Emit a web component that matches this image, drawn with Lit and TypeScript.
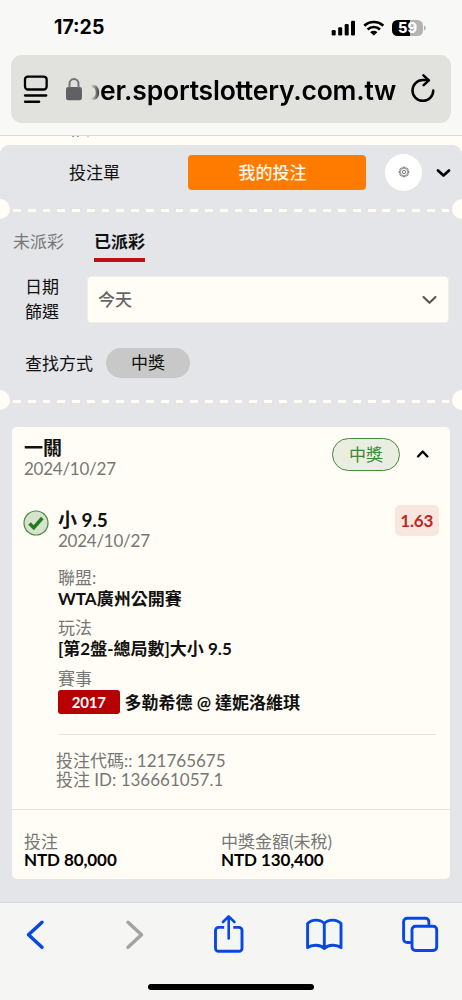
import { LitElement, html, css, svg } from "lit";
import { customElement, property } from "lit/decorators.js";

const base = css`
  * { box-sizing: border-box; }
  :host {
    display: block;
    font-family: Lato, "Noto Sans CJK TC", sans-serif;
    font-size: 17px;
    color: #111;
  }
  svg { display: block; }
`;

@customElement("browser-top")
class BrowserTop extends LitElement {
  static styles = [base, css`
    .top { height: 136px; background: #f8f8f6; border-bottom: 1px solid #d8d8d5; padding: 16px 11px 0; font-family: Inter, sans-serif; }
    .status { height: 23px; display: flex; align-items: center; padding: 0 25px 0 43px; }
    .time { flex: 1; font-size: 19.5px; font-weight: 700; color: #000; line-height: 23px; letter-spacing: 0; }
    .url { margin-top: 16px; height: 68px; border-radius: 11px; background: #e1e1de; display: flex; align-items: center; padding: 0 15px 0 12px; }
    .lock { margin-left: 17px; }
    .address {
      width: 306px; margin: 1px 0 0 8px; overflow: hidden; display: flex; justify-content: flex-end;
      font-size: 26.5px; line-height: 36px; font-weight: 600; color: #000; letter-spacing: -0.22px; white-space: nowrap;
      -webkit-mask-image: linear-gradient(90deg, transparent, #000 11px); mask-image: linear-gradient(90deg, transparent, #000 11px);
    }
    .reload { margin-left: 14px; }
  `];
  render() {
    return html`<div class="top">
      <div class="status">
        <span class="time">17:25</span>
        <svg width="96" height="20" viewBox="331 17 96 20">
          <rect x="332.7" y="29" width="4" height="5.5" rx="1.2"/><rect x="339.2" y="26.3" width="4" height="8.2" rx="1.2"/>
          <rect x="345.7" y="23" width="4" height="11.5" rx="1.2"/><rect x="352" y="19.8" width="4" height="14.7" rx="1.2"/>
          <g fill="none" stroke="#000" stroke-width="2.7"><path d="M365.3 24.8a13.8 13.8 0 0 1 19 0"/><path d="M368.6 28.5a9 9 0 0 1 12.4 0"/></g>
          <path d="M371.2 31.2a5.2 5.2 0 0 1 7.2 0l-3.6 3.4z"/>
          <path d="M398.500 19h12.500v16h-12.500a5.500 5.500 0 0 1-5.500-5.500v-5a5.500 5.500 0 0 1 5.500-5.500z"/>
          <path d="M411 19h7.500a5.500 5.500 0 0 1 5.500 5.500v5a5.500 5.500 0 0 1-5.500 5.500h-7.500z" fill="#b3b3b1"/>
          <path d="M425 24.500a2.600 2.600 0 0 1 0 5z" fill="#b3b3b1"/>
          <text x="408.500" y="32.200" text-anchor="middle" font-family="Inter" font-weight="800" font-size="14.500" fill="#fff">59</text>
        </svg>
      </div>
      <div class="url">
        <svg width="26" height="30" viewBox="23 74 26 30" fill="none" stroke="#000" stroke-width="2.3" stroke-linecap="round">
          <rect x="25" y="76.500" width="21.700" height="13" rx="3"/><path d="M25 95.500h21.300M25 101.800h14.200"/>
        </svg>
        <svg class="lock" width="17" height="24" viewBox="66 77 17 24">
          <rect x="66" y="87" width="16" height="13.300" rx="2.200" fill="#616064"/><path d="M69.500 88v-4.300a4.500 4.700 0 0 1 9 0v4.300" fill="none" stroke="#737276" stroke-width="2"/>
        </svg>
        <div class="address">member.sportslottery.com.tw</div>
        <svg class="reload" width="26" height="30" viewBox="409 74 26 30" fill="none" stroke="#000" stroke-width="2.500" stroke-linecap="round" stroke-linejoin="round">
          <path d="M432.300 90.500a10.400 10.400 0 1 1-10.400-10.400h5.500"/><path d="M422.500 75.300l5.400 5-5.200 4.900"/>
        </svg>
      </div>
    </div>`;
  }
}

@customElement("ticket-divider")
class TicketDivider extends LitElement {
  static styles = [base, css`
    .cut { height: 20px; display: flex; align-items: center; justify-content: space-between; }
    .notch { width: 10px; height: 20px; background: #fffdf5; border-radius: 0 10px 10px 0; }
    .notch.right { border-radius: 10px 0 0 10px; }
    .dash { width: 437px; height: 3px; margin-top: 2px; background: repeating-linear-gradient(90deg, #fffdf5 0 7.8px, transparent 7.8px 14.78px); }
  `];
  render() {
    return html`<div class="cut"><div class="notch"></div><div class="dash"></div><div class="notch right"></div></div>`;
  }
}

@customElement("slip-filters")
class SlipFilters extends LitElement {
  static styles = [base, css`
    .tabs { height: 54px; padding-top: 10px; display: flex; align-items: flex-start; }
    .slip { width: 188px; padding-left: 69px; line-height: 35px; }
    .mine { width: 178px; height: 34.500px; border-radius: 4px; background: #ff7b00; color: #fff7ec; font-weight: 500; text-align: center; line-height: 35px; padding-right: 9px; }
    .gear { width: 37px; height: 37px; border-radius: 50%; background: #fff; margin: -1.500px 0 0 19px; display: grid; place-items: center; }
    .chev { margin: 13px 0 0 12.500px; }
    .payout { display: flex; gap: 30px; height: 55px; padding: 10px 0 0 13px; }
    .payout span { line-height: 25px; height: 33px; color: #777; }
    .payout .on { font-weight: 700; color: #111; border-bottom: 4px solid #bd1118; }
    .date { display: flex; align-items: flex-start; padding-left: 25px; height: 74px; padding-top: 1px; }
    .label { width: 62px; padding-right: 25px; line-height: 24.500px; }
    .select { width: 361.500px; height: 47px; margin-top: .5px; background: #fffdf5; border: 1px solid #f0eee6; border-radius: 4px; display: flex; align-items: center; justify-content: space-between; padding: 0 11px 0 10px; font-weight: 500; color: #666; }
    .select span { padding-bottom: 2px; }
    .select svg { margin-top: 2px; }
    .find { display: flex; align-items: center; gap: 13px; height: 30px; padding-left: 25px; margin-bottom: 12px; line-height: 29px; }
    .pill { width: 84px; height: 29.500px; border-radius: 15px; background: #c8c8c8; text-align: center; line-height: 30px; }
  `];
  render() {
    const teeth = Array.from({ length: 8 }, (_, i) => svg`<path d="M-1.200-3.600l.2-1.200h2l.2 1.200" transform="rotate(${i * 45})"/>`);
    return html`
      <div class="tabs">
        <div class="slip">投注單</div><div class="mine">我的投注</div>
        <div class="gear"><svg width="12" height="12" viewBox="-6 -6 12 12" fill="none" stroke="#555" stroke-width=".8">${teeth}<circle r="3.600" stroke-width=".5"/><circle r="1.600"/></svg></div>
        <svg class="chev" width="17" height="11" viewBox="0 0 17 11" fill="none" stroke="#000" stroke-width="2.700" stroke-linecap="round" stroke-linejoin="round"><path d="M3 2.500l5.500 5 5.500-5"/></svg>
      </div>
      <ticket-divider></ticket-divider>
      <div class="payout"><span>未派彩</span><span class="on">已派彩</span></div>
      <div class="date">
        <div class="label">日期篩選</div>
        <div class="select"><span>今天</span><svg width="15" height="10" viewBox="0 0 15 10" fill="none" stroke="#555" stroke-width="2.100" stroke-linecap="round" stroke-linejoin="round"><path d="M1.500 2l6 5.800 6-5.800"/></svg></div>
      </div>
      <div class="find"><span>查找方式</span><span class="pill">中獎</span></div>
      <ticket-divider></ticket-divider>`;
  }
}

@customElement("bet-field")
class BetField extends LitElement {
  @property() label = "";
  static styles = [base, css`
    .field { height: 50.300px; }
    .label { line-height: 20px; height: 20px; color: #777; }
    .value { line-height: 21px; font-weight: 700; color: #111; white-space: nowrap; }
  `];
  render() {
    return html`<div class="field"><div class="label">${this.label}</div><div class="value"><slot></slot></div></div>`;
  }
}

@customElement("bet-card")
class BetCard extends LitElement {
  static styles = [base, css`
    .card { margin: 17px 12px 0; height: 452px; border-radius: 5px; background: #fffdf5; }
    .head { display: flex; height: 77px; padding: 10.500px 0 0 12px; }
    .name { font-size: 19px; font-weight: 700; line-height: 20px; letter-spacing: -.1px; }
    .when { color: #777; line-height: 21px; letter-spacing: -.25px; }
    .grow { flex: 1; }
    .won { width: 68px; height: 33px; border: 1.500px solid #45893b; border-radius: 17px; background: #eaeee0; color: #3b8930; text-align: center; line-height: 31px; margin-top: .5px; }
    .up { margin: 10px 20px 0 15px; }
    .pick { display: flex; padding: 5.500px 11px 0 12px; height: 64px; }
    .tick { margin: 0 9px 0 -1px; }
    .odds { width: 44.500px; height: 31px; border-radius: 5px; background: #f7e7df; color: #bd2822; font-weight: 700; text-align: center; line-height: 31px; margin-top: -4.500px; letter-spacing: -.1px; }
    .fields { padding-left: 46px; height: 166px; }
    .match { display: flex; gap: 5px; align-items: center; height: 27px; }
    .num { width: 61.500px; height: 24.500px; border-radius: 3px; background: #b60000; color: #fff; font-size: 15px; line-height: 25px; text-align: center; letter-spacing: -.2px; }
    .codes { margin: 0 14px 0 46px; border-top: 1px solid #e7e4df; height: 75px; padding-top: 17px; color: #777; line-height: 18.600px; }
    .codes div { margin-left: -2px; }
    .totals { border-top: 1px solid #eae5dc; display: grid; grid-template-columns: 197px 1fr; padding: 21.500px 0 0 12px; line-height: 19px; color: #777; }
    .totals b { display: block; color: #000; line-height: 18px; letter-spacing: -.1px; }
  `];
  render() {
    return html`<div class="card">
      <div class="head">
        <div><div class="name">一關</div><div class="when">2024/10/27</div></div><div class="grow"></div>
        <div class="won">中獎</div>
        <svg class="up" width="15" height="12" viewBox="0 0 15 12" fill="none" stroke="#000" stroke-width="2.300" stroke-linecap="round" stroke-linejoin="round"><path d="M3 8.500l4.700-5 4.700 5"/></svg>
      </div>
      <div class="pick">
        <svg class="tick" width="26" height="26" viewBox="0 0 26 26"><circle cx="13" cy="13" r="12" fill="#d6e3ce" stroke="#4b8c40" stroke-width="1.200"/><path d="M6.500 13.500l4.300 4.200 8.500-9.700" fill="none" stroke="#267b1e" stroke-width="3.500"/></svg>
        <div><div class="name">小 9.5</div><div class="when">2024/10/27</div></div><div class="grow"></div>
        <div class="odds">1.63</div>
      </div>
      <div class="fields">
        <bet-field label="聯盟:">WTA廣州公開賽</bet-field>
        <bet-field label="玩法">[第2盤-總局數]大小 9.5</bet-field>
        <bet-field label="賽事"><div class="match"><span class="num">2017</span><span>多勒希德 @ 達妮洛維琪</span></div></bet-field>
      </div>
      <div class="codes"><div>投注代碼:: 121765675</div><div>投注 ID: 136661057.1</div></div>
      <div class="totals"><div>投注<b>NTD 80,000</b></div><div>中獎金額(未稅)<b>NTD 130,400</b></div></div>
    </div>`;
  }
}

@customElement("browser-bottom")
class BrowserBottom extends LitElement {
  static styles = [base, css`
    .bar { height: 98px; background: #f5f5f4; border-top: 1px solid #d6d6d7; padding-top: 9px; }
    .icons { display: grid; grid-template-columns: 100px 88px 92px 97px 39px; padding-left: 24px; height: 72px; }
    .home { width: 165.500px; height: 6px; border-radius: 3px; background: #000; margin: 0 auto; }
  `];
  render() {
    const icon = (x: number, w: number, color: string, d: unknown) => html`<svg width=${w} height="44" viewBox="${x} 912 ${w} 44" fill="none" stroke=${color} stroke-width="2.900" stroke-linecap="round" stroke-linejoin="round">${d}</svg>`;
    const blue = "#0748e5";
    return html`<div class="bar">
      <div class="icons">
        ${icon(24, 22, blue, svg`<path stroke-width="3.500" d="M42 922.300L28.500 934.800l13.500 12.500"/>`)}
        ${icon(124, 22, "#a3a3a3", svg`<path stroke-width="3.500" d="M128 922.300l13.500 12.500L128 947.300"/>`)}
        ${icon(212, 34, blue, svg`<path stroke-linecap="butt" d="M224.200 927.400h-5.700a3 3 0 0 0-3 3v17.900a3 3 0 0 0 3 3h20.500a3 3 0 0 0 3-3v-17.900a3 3 0 0 0-3-3h-5.700"/><path stroke-width="2.600" d="M228.700 938.500v-21.500M223 922l5.700-5.700 5.700 5.700"/>`)}
        ${icon(304, 40, blue, svg`<path d="M324.300 923.500c-4-4.500-12.500-4.500-16.700 0v24.200c4.200-3.300 12.700-3.300 16.700 0.700c4-4 12.500-4 16.700-.7v-24.200c-4.200-4.500-12.700-4.500-16.700 0v24"/>`)}
        ${icon(401, 39, blue, svg`<path d="M410 942.500h-2.900a3.500 3.500 0 0 1-3.500-3.500v-17.300a3.500 3.500 0 0 1 3.500-3.500h18.300a3.500 3.500 0 0 1 3.500 3.500v2.500"/><rect x="412" y="926.300" width="24.700" height="24.200" rx="3.500"/>`)}
      </div>
      <div class="home"></div>
    </div>`;
  }
}

@customElement("app-root")
class AppRoot extends LitElement {
  static styles = [base, css`
    :host { width: 462px; height: 1000px; overflow: hidden; background: #fffdf5; }
    .peek { height: 9px; padding-left: 70px; }
    .panel { height: 757px; background: #e4e5e8; border-radius: 9px 9px 0 0; }
  `];
  render() {
    return html`
      <browser-top></browser-top>
      <div class="peek"><svg width="22" height="2" viewBox="0 0 22 2" stroke="#999" stroke-width="1"><path d="M2 .5h2M7 .5h2M18 .2v1"/></svg></div>
      <div class="panel"><slip-filters></slip-filters><bet-card></bet-card></div>
      <browser-bottom></browser-bottom>`;
  }
}
